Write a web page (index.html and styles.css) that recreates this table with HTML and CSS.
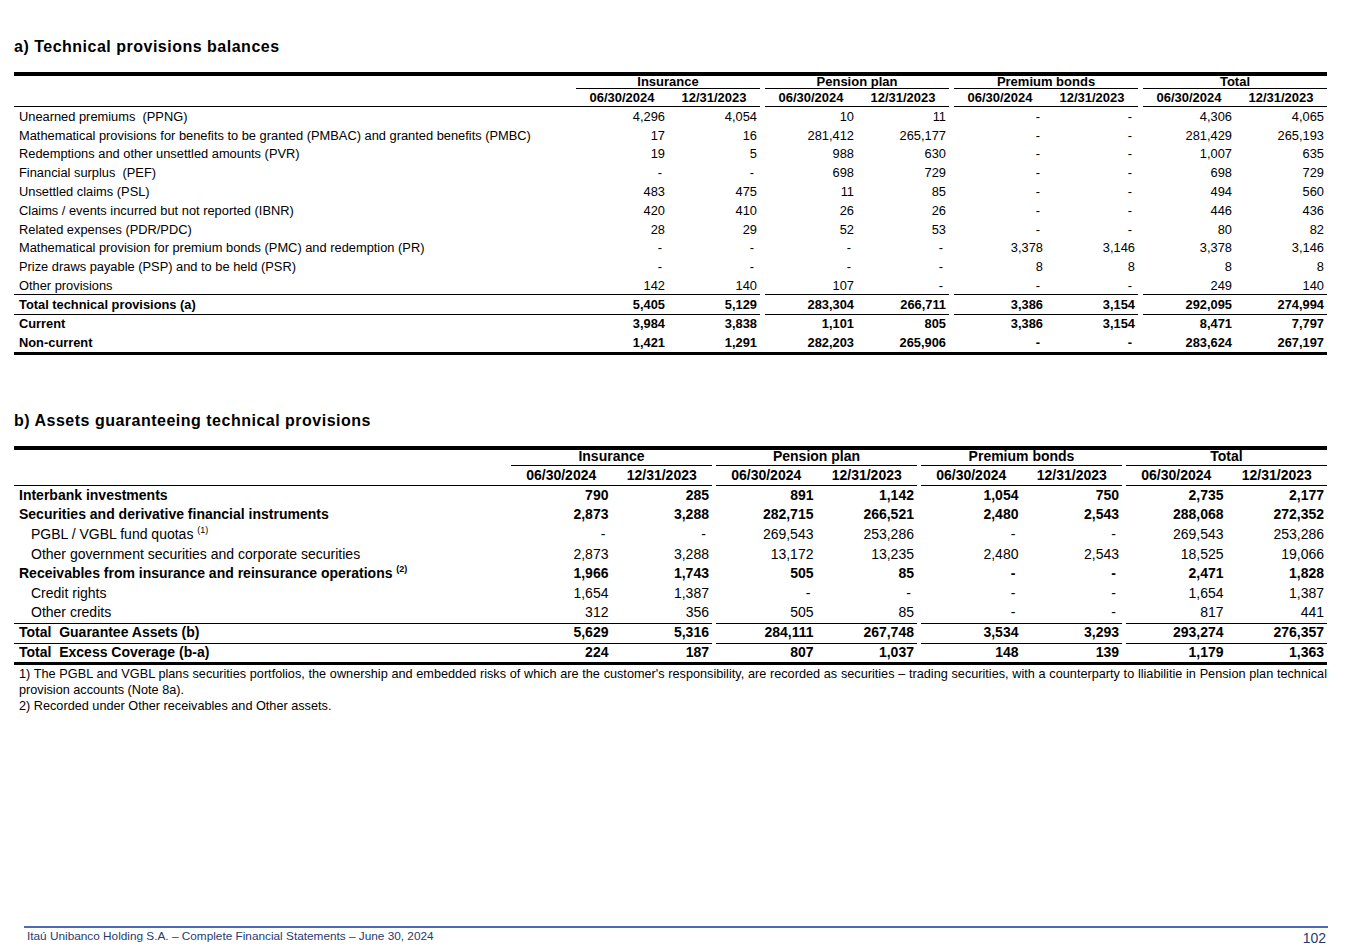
FILE: index.html
```html
<!DOCTYPE html>
<html lang="en">
<head>
<meta charset="utf-8">
<title>Technical provisions</title>
<link rel="stylesheet" href="styles.css">
</head>
<body>
<div class="page">
  <h2 class="title">a) Technical provisions balances</h2>
  <table class="fin fin-a">
    <colgroup>
      <col><col class="num"><col class="num"><col class="gap"><col class="num"><col class="num"><col class="gap"><col class="num"><col class="num"><col class="gap"><col class="num"><col class="num">
    </colgroup>
    <thead>
      <tr class="grp">
        <th></th><th colspan="2" class="g">Insurance</th><th class="sp"></th><th colspan="2" class="g">Pension plan</th><th class="sp"></th><th colspan="2" class="g">Premium bonds</th><th class="sp"></th><th colspan="2" class="g">Total</th>
      </tr>
      <tr class="dates">
        <th></th><th>06/30/2024</th><th>12/31/2023</th><th class="sp"></th><th>06/30/2024</th><th>12/31/2023</th><th class="sp"></th><th>06/30/2024</th><th>12/31/2023</th><th class="sp"></th><th>06/30/2024</th><th>12/31/2023</th>
      </tr>
    </thead>
    <tbody>
      <tr><td class="lbl">Unearned premiums&nbsp; (PPNG)</td><td>4,296</td><td>4,054</td><td class="sp"></td><td>10</td><td>11</td><td class="sp"></td><td class="d">-</td><td class="d">-</td><td class="sp"></td><td>4,306</td><td>4,065</td></tr>
      <tr><td class="lbl">Mathematical provisions for benefits to be granted (PMBAC) and granted benefits (PMBC)</td><td>17</td><td>16</td><td class="sp"></td><td>281,412</td><td>265,177</td><td class="sp"></td><td class="d">-</td><td class="d">-</td><td class="sp"></td><td>281,429</td><td>265,193</td></tr>
      <tr><td class="lbl">Redemptions and other unsettled amounts (PVR)</td><td>19</td><td>5</td><td class="sp"></td><td>988</td><td>630</td><td class="sp"></td><td class="d">-</td><td class="d">-</td><td class="sp"></td><td>1,007</td><td>635</td></tr>
      <tr><td class="lbl">Financial surplus&nbsp; (PEF)</td><td class="d">-</td><td class="d">-</td><td class="sp"></td><td>698</td><td>729</td><td class="sp"></td><td class="d">-</td><td class="d">-</td><td class="sp"></td><td>698</td><td>729</td></tr>
      <tr><td class="lbl">Unsettled claims (PSL)</td><td>483</td><td>475</td><td class="sp"></td><td>11</td><td>85</td><td class="sp"></td><td class="d">-</td><td class="d">-</td><td class="sp"></td><td>494</td><td>560</td></tr>
      <tr><td class="lbl">Claims / events incurred but not reported (IBNR)</td><td>420</td><td>410</td><td class="sp"></td><td>26</td><td>26</td><td class="sp"></td><td class="d">-</td><td class="d">-</td><td class="sp"></td><td>446</td><td>436</td></tr>
      <tr><td class="lbl">Related expenses (PDR/PDC)</td><td>28</td><td>29</td><td class="sp"></td><td>52</td><td>53</td><td class="sp"></td><td class="d">-</td><td class="d">-</td><td class="sp"></td><td>80</td><td>82</td></tr>
      <tr><td class="lbl">Mathematical provision for premium bonds (PMC) and redemption (PR)</td><td class="d">-</td><td class="d">-</td><td class="sp"></td><td class="d">-</td><td class="d">-</td><td class="sp"></td><td>3,378</td><td>3,146</td><td class="sp"></td><td>3,378</td><td>3,146</td></tr>
      <tr><td class="lbl">Prize draws payable (PSP) and to be held (PSR)</td><td class="d">-</td><td class="d">-</td><td class="sp"></td><td class="d">-</td><td class="d">-</td><td class="sp"></td><td>8</td><td>8</td><td class="sp"></td><td>8</td><td>8</td></tr>
      <tr class="rule"><td class="lbl">Other provisions</td><td>142</td><td>140</td><td class="sp"></td><td>107</td><td class="d">-</td><td class="sp"></td><td class="d">-</td><td class="d">-</td><td class="sp"></td><td>249</td><td>140</td></tr>
      <tr class="rule bold"><td class="lbl">Total technical provisions (a)</td><td>5,405</td><td>5,129</td><td class="sp"></td><td>283,304</td><td>266,711</td><td class="sp"></td><td>3,386</td><td>3,154</td><td class="sp"></td><td>292,095</td><td>274,994</td></tr>
      <tr class="bold"><td class="lbl">Current</td><td>3,984</td><td>3,838</td><td class="sp"></td><td>1,101</td><td>805</td><td class="sp"></td><td>3,386</td><td>3,154</td><td class="sp"></td><td>8,471</td><td>7,797</td></tr>
      <tr class="bold last"><td class="lbl">Non-current</td><td>1,421</td><td>1,291</td><td class="sp"></td><td>282,203</td><td>265,906</td><td class="sp"></td><td class="d">-</td><td class="d">-</td><td class="sp"></td><td>283,624</td><td>267,197</td></tr>
    </tbody>
  </table>

  <h2 class="title title-b">b) Assets guaranteeing technical provisions</h2>
  <table class="fin fin-b">
    <colgroup>
      <col><col class="num"><col class="num"><col class="gap"><col class="num"><col class="num"><col class="gap"><col class="num"><col class="num"><col class="gap"><col class="num"><col class="num">
    </colgroup>
    <thead>
      <tr class="grp">
        <th></th><th colspan="2" class="g">Insurance</th><th class="sp"></th><th colspan="2" class="g">Pension plan</th><th class="sp"></th><th colspan="2" class="g">Premium bonds</th><th class="sp"></th><th colspan="2" class="g">Total</th>
      </tr>
      <tr class="dates">
        <th></th><th>06/30/2024</th><th>12/31/2023</th><th class="sp"></th><th>06/30/2024</th><th>12/31/2023</th><th class="sp"></th><th>06/30/2024</th><th>12/31/2023</th><th class="sp"></th><th>06/30/2024</th><th>12/31/2023</th>
      </tr>
    </thead>
    <tbody>
      <tr class="bold"><td class="lbl">Interbank investments</td><td>790</td><td>285</td><td class="sp"></td><td>891</td><td>1,142</td><td class="sp"></td><td>1,054</td><td>750</td><td class="sp"></td><td>2,735</td><td>2,177</td></tr>
      <tr class="bold"><td class="lbl">Securities and derivative financial instruments</td><td>2,873</td><td>3,288</td><td class="sp"></td><td>282,715</td><td>266,521</td><td class="sp"></td><td>2,480</td><td>2,543</td><td class="sp"></td><td>288,068</td><td>272,352</td></tr>
      <tr><td class="lbl ind">PGBL / VGBL fund quotas <sup>(1)</sup></td><td class="d">-</td><td class="d">-</td><td class="sp"></td><td>269,543</td><td>253,286</td><td class="sp"></td><td class="d">-</td><td class="d">-</td><td class="sp"></td><td>269,543</td><td>253,286</td></tr>
      <tr><td class="lbl ind">Other government securities and corporate securities</td><td>2,873</td><td>3,288</td><td class="sp"></td><td>13,172</td><td>13,235</td><td class="sp"></td><td>2,480</td><td>2,543</td><td class="sp"></td><td>18,525</td><td>19,066</td></tr>
      <tr class="bold"><td class="lbl">Receivables from insurance and reinsurance operations <sup>(2)</sup></td><td>1,966</td><td>1,743</td><td class="sp"></td><td>505</td><td>85</td><td class="sp"></td><td class="d">-</td><td class="d">-</td><td class="sp"></td><td>2,471</td><td>1,828</td></tr>
      <tr><td class="lbl ind">Credit rights</td><td>1,654</td><td>1,387</td><td class="sp"></td><td class="d">-</td><td class="d">-</td><td class="sp"></td><td class="d">-</td><td class="d">-</td><td class="sp"></td><td>1,654</td><td>1,387</td></tr>
      <tr class="rule"><td class="lbl ind">Other credits</td><td>312</td><td>356</td><td class="sp"></td><td>505</td><td>85</td><td class="sp"></td><td class="d">-</td><td class="d">-</td><td class="sp"></td><td>817</td><td>441</td></tr>
      <tr class="rule bold"><td class="lbl">Total&nbsp; Guarantee Assets (b)</td><td>5,629</td><td>5,316</td><td class="sp"></td><td>284,111</td><td>267,748</td><td class="sp"></td><td>3,534</td><td>3,293</td><td class="sp"></td><td>293,274</td><td>276,357</td></tr>
      <tr class="bold last"><td class="lbl">Total&nbsp; Excess Coverage (b-a)</td><td>224</td><td>187</td><td class="sp"></td><td>807</td><td>1,037</td><td class="sp"></td><td>148</td><td>139</td><td class="sp"></td><td>1,179</td><td>1,363</td></tr>
    </tbody>
  </table>

  <div class="notes">
    <p class="note-just">1) The PGBL and VGBL plans securities portfolios, the ownership and embedded risks of which are the customer's responsibility, are recorded as securities – trading securities, with a counterparty to lliabilitie in Pension plan technical provision accounts (Note 8a).</p>
    <p>2) Recorded under Other receivables and Other assets.</p>
  </div>

  <footer class="footer">
    <span class="foot-text">Itaú Unibanco Holding S.A. – Complete Financial Statements – June 30, 2024</span>
    <span class="page-no">102</span>
  </footer>
</div>
</body>
</html>
```

FILE: styles.css
```css
html, body {
  margin: 0;
  padding: 0;
  background: #fff;
}

.page {
  display: flex;
  flex-direction: column;
  min-height: 951px;
  box-sizing: border-box;
  padding: 0 19px 0 14px;
  font-family: "Liberation Sans", Arial, sans-serif;
  color: #000;
}

.title {
  margin: 38px 0 0;
  font-size: 16px;
  line-height: 18px;
  font-weight: bold;
  letter-spacing: 0.5px;
}

.title-b {
  margin-top: 57px;
}

.fin {
  width: 100%;
  border-collapse: collapse;
  table-layout: fixed;
  margin-top: 16px;
}

.fin th,
.fin td {
  padding: 0;
  white-space: nowrap;
  overflow: visible;
}

.fin th {
  font-weight: bold;
  text-align: center;
}

.fin thead tr.grp th {
  border-top: 4px solid #000;
}

.fin th.g {
  border-bottom: 1px solid #000;
}

.fin tr.dates th {
  border-bottom: 1px solid #000;
}

.fin tr.dates th.sp {
  border-bottom: none;
}

.fin td {
  text-align: right;
  padding-right: 3px;
}

.fin td.d {
  padding-right: 6px;
}

.fin td.lbl {
  text-align: left;
  padding-left: 5px;
  padding-right: 0;
}

.fin td.lbl.ind {
  padding-left: 17px;
}

.fin tr.bold td {
  font-weight: bold;
}

.fin tr.rule td {
  border-bottom: 1px solid #000;
}

.fin tr.rule td.sp {
  border-bottom: none;
}

.fin tr.last td {
  border-bottom: 3px solid #000;
}

/* table a */
.fin-a col.num { width: 92px; }
.fin-a col.gap { width: 5px; }

.fin-a th {
  font-size: 13px;
}

.fin-a tr.grp th {
  height: 12px;
  line-height: 11px;
  padding-bottom: 1px;
  box-sizing: border-box;
}

.fin-a tr.dates th {
  height: 17px;
  line-height: 17px;
  padding-bottom: 0;
}

.fin-a td {
  height: 18.8px;
  font-size: 12.85px;
  line-height: 15px;
}

.fin-a tr.rule td {
  height: 18.2px;
}

/* table b */
.fin-b col.num { width: 100.5px; }
.fin-b col.gap { width: 4px; }

.fin-b th {
  font-size: 14px;
}

.fin-b tr.grp th {
  height: 15px;
  line-height: 13px;
  padding-bottom: 2px;
  box-sizing: border-box;
}

.fin-b tr.dates th {
  height: 19px;
  line-height: 19px;
}

.fin-b td {
  height: 19.7px;
  font-size: 14px;
  line-height: 16px;
  padding-bottom: 2px;
  box-sizing: border-box;
}

sup {
  font-size: 9px;
  line-height: 0;
  vertical-align: 6px;
  font-weight: inherit;
}

.notes {
  margin-top: 1px;
  font-size: 12.7px;
  line-height: 16px;
}

.notes p {
  margin: 0;
  padding-left: 5px;
}

.note-just {
  text-align: justify;
}

.footer {
  margin-top: auto;
  margin-left: 10px;
  margin-right: -1px;
  border-top: 2px solid #4a6cb8;
  display: flex;
  justify-content: space-between;
  align-items: flex-start;
  padding: 1px 2px 5px 3px;
  color: #1f3a70;
}

.foot-text {
  font-size: 11.8px;
  line-height: 14px;
}

.page-no {
  font-size: 14px;
  line-height: 16px;
  margin-top: 1px;
}
```
